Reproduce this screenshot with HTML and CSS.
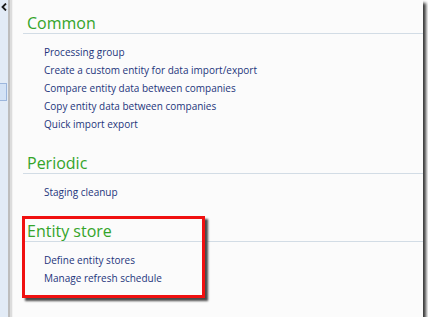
FILE: index.html
```html
<!DOCTYPE html>
<html lang="en">
<head>
    <meta charset="UTF-8">
    <title>Data import/export setup</title>
    <link rel="stylesheet" href="styles.css">
</head>
<body>
    <div class="frame">
        <div class="side">
            <svg class="collapse" width="6" height="8" viewBox="0 0 6 8"><path d="M5 0.5 L1.5 4 L5 7.5" fill="none" stroke="#1a1a1a" stroke-width="1.8"/></svg>
            <div class="side_btn"></div>
        </div>
        <div class="split"></div>
        <div class="content">
            <div class="group">
                <h2>Common</h2>
                <ul>
                    <li><a href="#">Processing group</a></li>
                    <li><a href="#">Create a custom entity for data import/export</a></li>
                    <li><a href="#">Compare entity data between companies</a></li>
                    <li><a href="#">Copy entity data between companies</a></li>
                    <li><a href="#">Quick import export</a></li>
                </ul>
            </div>
            <div class="group">
                <h2>Periodic</h2>
                <ul>
                    <li><a href="#">Staging cleanup</a></li>
                </ul>
            </div>
            <div class="group">
                <div class="mark"></div>
                <h2>Entity store</h2>
                <ul>
                    <li><a href="#">Define entity stores</a></li>
                    <li><a href="#">Manage refresh schedule</a></li>
                </ul>
            </div>
        </div>
    </div>
</body>
</html>
```

FILE: styles.css
```css
body { margin: 0; background: #fff; font-family: "Open Sans", "Noto Sans", sans-serif;}
.frame { width: 423px; height: 317px; display: flex; background: #fbfbfb; box-shadow: 3px 3px 3px #3a3a3a;}
.side { width: 8px; background: #e2ebf6;}
.collapse { display: block; margin: 3px 0 0 1px;}
.side_btn { margin-top: 72px; width: 6px; height: 16px; border: 1px solid #9cb6dc; border-left: none; background: #d3e2f5;}
.split { width: 5px; background: linear-gradient(to right, #bdbdbd 0, #bdbdbd 2px, #dcdcdc 2px, #dcdcdc 4px, #f2f2f2 4px);}
.content { flex: 1; padding: 14px 0 0 10px;}
.group { margin-bottom: 23px; position: relative;}
.group h2 { margin: 0 0 7px 0; padding: 0 0 0 4px; font-weight: normal; font-size: 16px; line-height: 19px; color: #34a42a; border-bottom: 1px solid #d2dce5;}
.group ul { list-style: none; margin: 0; padding: 0 0 0 21px;}
.group li { height: 18px; line-height: 18px;}
.group a { font-size: 10px; color: #1d357c; text-decoration: none;}
.mark { position: absolute; left: -1px; top: -6px; width: 183px; height: 82px; box-sizing: border-box; border: 3px solid #f01010; box-shadow: 3px 3px 2px #4a4a4a;}
```
